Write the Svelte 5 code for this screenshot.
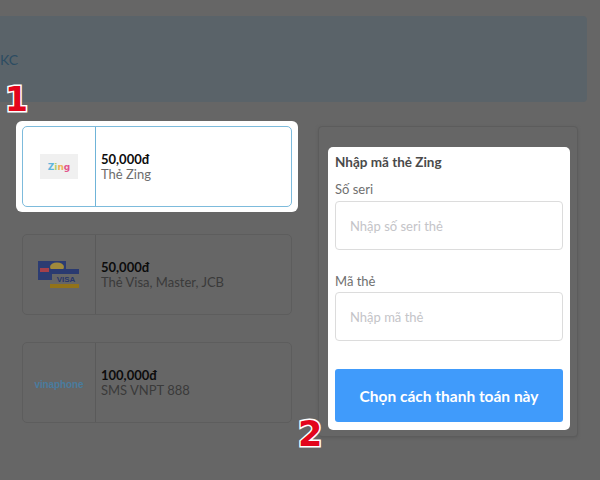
<script>
  const cards = [
    { price: '50,000đ', name: 'Thẻ Zing', kind: 'zing', active: true },
    { price: '50,000đ', name: 'Thẻ Visa, Master, JCB', kind: 'visa', active: false },
    { price: '100,000đ', name: 'SMS VNPT 888', kind: 'vina', active: false }
  ];
</script>

<div class="page">
  <div class="banner"><span>KC</span></div>
  <div class="main">
    <div class="cards">
      {#each cards as c}
        <div class="card" class:active={c.active}>
          <div class="logo">
            {#if c.kind === 'zing'}
              <div class="zing"><b class="z1">Z</b><b class="z2">i</b><b class="z3">n</b><b class="z4">g</b></div>
            {:else if c.kind === 'visa'}
              <svg width="42" height="27" viewBox="0 0 42 27">
                <rect x="0" y="0" width="28" height="19" fill="#2c3c72" />
                <ellipse cx="19" cy="6" rx="7" ry="4.5" fill="#a08a3c" />
                <rect x="2" y="7" width="9" height="4" fill="#a5404a" />
                <rect x="12" y="8" width="29" height="5" fill="#2a3a70" />
                <rect x="14" y="13" width="28" height="9" fill="#666666" />
                <text x="28" y="21" class="visa">VISA</text>
                <rect x="12" y="23" width="29" height="4" fill="#92731a" />
              </svg>
            {:else}
              <span class="vina">vinaphone</span>
            {/if}
          </div>
          <div class="info">
            <strong>{c.price}</strong>
            <span>{c.name}</span>
          </div>
        </div>
      {/each}
    </div>
    <div class="panel">
      <form class="form">
        <h3>Nhập mã thẻ Zing</h3>
        <label for="seri">Số seri</label>
        <input id="seri" placeholder="Nhập số seri thẻ" />
        <label class="second" for="ma">Mã thẻ</label>
        <input id="ma" placeholder="Nhập mã thẻ" />
        <button type="button">Chọn cách thanh toán này</button>
      </form>
    </div>
  </div>
  <div class="num one">1</div>
  <div class="num two">2</div>
</div>

<style>
  :global(body) {
    margin: 0;
  }
  .page {
    position: relative;
    isolation: isolate;
    width: 600px;
    height: 480px;
    overflow: hidden;
    background: #666666;
    font-family: "Lato", "Noto Sans", sans-serif;
  }
  .banner {
    box-sizing: border-box;
    height: 86px;
    margin: 16px 13px 0 -8px;
    padding-left: 8px;
    border-radius: 4px;
    background: #5a6369;
    display: flex;
    align-items: center;
    color: #2c4c62;
    font-size: 14px;
  }
  .main {
    display: flex;
    align-items: flex-start;
    padding: 24px 0 0 22px;
  }
  .cards {
    width: 270px;
    display: flex;
    flex-direction: column;
    gap: 27px;
  }
  .card {
    box-sizing: border-box;
    height: 81px;
    display: flex;
    border: 1px solid #5d5d5d;
    border-radius: 5px;
  }
  .card.active {
    position: relative;
    background: #fff;
    border-color: #7dbbdc;
  }
  .card.active::before {
    content: "";
    position: absolute;
    inset: -6px -7px;
    border-radius: 6px;
    background: #fff;
    z-index: -1;
  }
  .logo {
    box-sizing: border-box;
    width: 73px;
    border-right: 1px solid #5a5a5a;
    display: flex;
    align-items: center;
    justify-content: center;
  }
  .active .logo {
    border-right-color: #6fb4d8;
  }
  .zing {
    box-sizing: border-box;
    width: 38px;
    height: 25px;
    background: #f0f0f0;
    display: flex;
    align-items: center;
    justify-content: center;
    font-family: "DejaVu Sans", sans-serif;
    font-size: 9px;
  }
  .z1 { color: #5fb6dc; }
  .z2 { color: #b5cc6a; }
  .z3 { color: #eeb25a; }
  .z4 { color: #e2558c; }
  .visa {
    font-size: 8px;
    font-weight: 700;
    fill: #27356a;
    text-anchor: middle;
    font-family: "Liberation Sans", sans-serif;
  }
  .vina {
    font-family: "Liberation Sans", sans-serif;
    font-size: 10px;
    font-weight: 700;
    letter-spacing: -0.1px;
    color: #4a7c9e;
    padding-top: 3px;
  }
  .info {
    display: flex;
    flex-direction: column;
    justify-content: center;
    padding-left: 5px;
    line-height: 15.5px;
    font-size: 13px;
    color: #3a3a3a;
    padding-top: 1px;
  }
  .info strong {
    color: #0c0c0c;
    font-size: 13px;
    font-weight: 700;
  }
  .active .info span {
    color: #6d6d6d;
  }
  .panel {
    box-sizing: border-box;
    width: 260px;
    height: 311px;
    margin-left: 26px;
    padding: 20px 7px 0 9px;
    border: 1px solid #5c5c5c;
    border-radius: 4px;
    background: #666666;
    box-shadow: 0 1px 3px #5c5c5c;
  }
  .form {
    box-sizing: border-box;
    height: 283px;
    padding: 7px;
    border-radius: 5px;
    background: #fff;
    display: flex;
    flex-direction: column;
  }
  h3 {
    margin: 0;
    font-size: 13.5px;
    line-height: 16px;
    font-weight: 700;
    color: #4a4a4a;
  }
  label {
    margin-top: 11px;
    font-size: 13px;
    line-height: 16px;
    color: #6f6f6f;
    margin-bottom: 4px;
  }
  label.second {
    margin-top: 23px;
    margin-bottom: 3px;
  }
  input {
    box-sizing: border-box;
    width: 100%;
    height: 49px;
    padding: 0 14px;
    border: 1px solid #dcdcdc;
    border-radius: 4px;
    font: inherit;
    font-size: 13px;
    background: #fff;
  }
  input::placeholder {
    color: #c4c4c8;
    opacity: 1;
  }
  button {
    margin-top: 28px;
    height: 53px;
    padding: 0;
    border: 0;
    border-radius: 3px;
    background: #409bfb;
    color: #fff;
    font: inherit;
    font-size: 15.5px;
    font-weight: 700;
  }
  .num {
    position: absolute;
    font-family: "DejaVu Sans", sans-serif;
    font-weight: 700;
    line-height: 1;
    color: #e3051b;
    -webkit-text-stroke: 3px #ffffff;
    paint-order: stroke fill;
  }
  .one {
    left: 5px;
    top: 83px;
    font-size: 33px;
  }
  .two {
    left: 298px;
    top: 417px;
    font-size: 35px;
  }
</style>
